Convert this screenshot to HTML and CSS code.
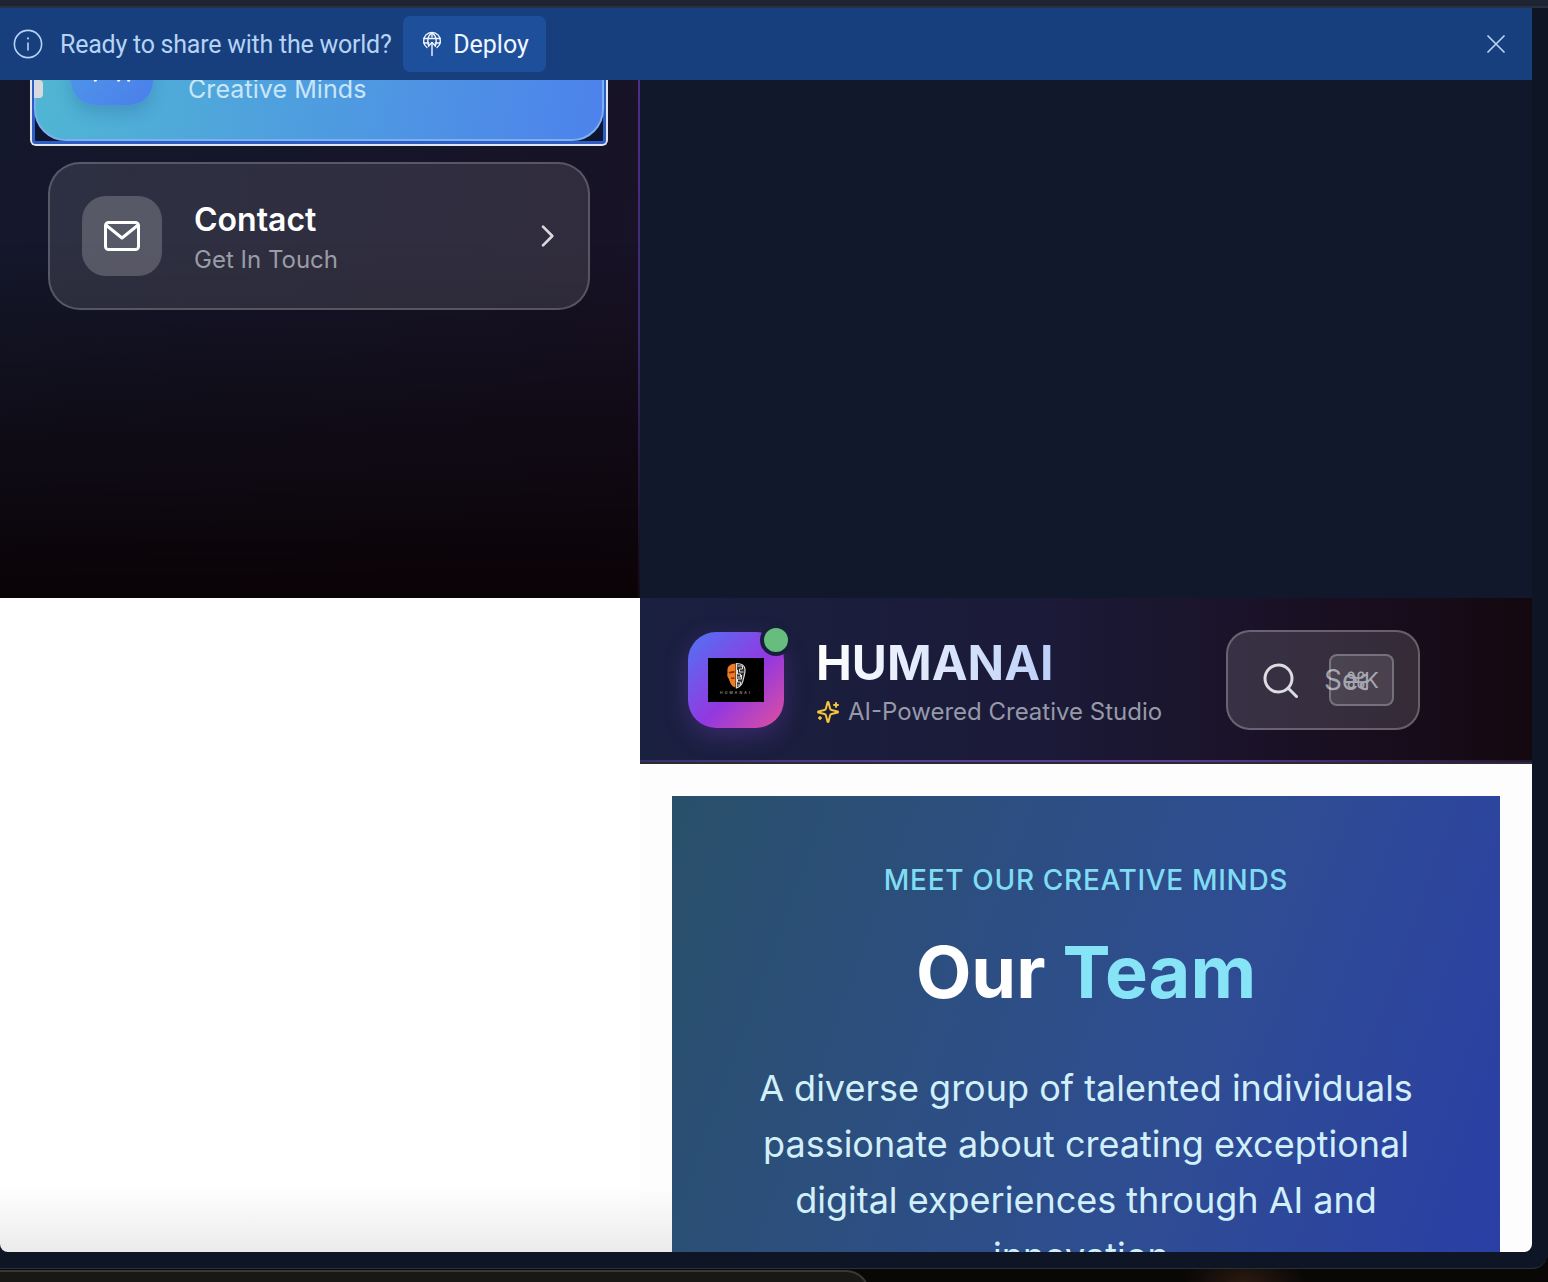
FILE: index.html
```html
<!DOCTYPE html>
<html lang="en">
<head>
<meta charset="utf-8">
<title>HUMANAI</title>
<link rel="stylesheet" href="styles.css">
</head>
<body>
<div class="frame">
  <div class="strip"></div>
  <div class="viewport">
    <div class="banner">
      <svg class="info-icon" viewBox="0 0 30 30" width="30" height="30" fill="none" stroke="currentColor" stroke-width="1.6" stroke-linecap="round"><circle cx="15" cy="15" r="13.6"/><path d="M15 14v7"/><path d="M15 9.2v.4" stroke-width="2"/></svg>
      <span class="banner-text">Ready to share with the world?</span>
      <button class="deploy">
        <svg viewBox="0 0 22 26" width="22" height="26" fill="none" stroke="currentColor" stroke-width="1.4" stroke-linecap="round" stroke-linejoin="round"><path d="M6 16.5A8.4 8.4 0 1 1 16 16.5"/><path d="M11 1.8C7.5 4 6.8 7 6.8 10c0 2 .4 3.5 1 5"/><path d="M11 1.8c3.5 2.2 4.2 5.2 4.2 8.2 0 2-.4 3.5-1 5"/><path d="M2.8 7.5h16.4"/><path d="M2.8 12h5"/><path d="M14.2 12h5"/><path d="M11 2v4"/><path d="M11 24.5V11.5"/><path d="M7.5 15L11 11.5 14.500 15"/></svg>
        <span>Deploy</span>
      </button>
      <svg class="close-icon" viewBox="0 0 20 20" width="20" height="20" fill="none" stroke="currentColor" stroke-width="1.7"><path d="M1.500 1.500l17 17M18.500 1.500l-17 17"/></svg>
    </div>
    <div class="split">
      <div class="left">
        <aside class="sidebar">
          <div class="nav-active">
            <span class="nav-marker"></span>
            <div class="nav-active-inner">
              <div class="nav-active-icon">
                <svg viewBox="0 0 24 24" width="40" height="40" fill="none" stroke="#fff" stroke-width="2" stroke-linecap="round" stroke-linejoin="round"><path d="M16 21v-2a4 4 0 0 0-4-4H6a4 4 0 0 0-4 4v2"/><circle cx="9" cy="7" r="4"/><path d="M22 21v-2a4 4 0 0 0-3-3.870"/><path d="M16 3.130a4 4 0 0 1 0 7.750"/></svg>
              </div>
              <div class="nav-active-text">
                <div class="nav-title">Our Team</div>
                <div class="nav-active-sub">Creative Minds</div>
              </div>
            </div>
          </div>
          <a class="nav-item">
            <div class="nav-icon">
              <svg viewBox="0 0 44 44" width="44" height="44" fill="none" stroke="#fff" stroke-width="3" stroke-linecap="round" stroke-linejoin="round"><rect x="5.500" y="8.500" width="33" height="27" rx="3"/><path d="M6.500 11.500L22 24l15.500-12.500"/></svg>
            </div>
            <div class="nav-text">
              <div class="nav-title">Contact</div>
              <div class="nav-sub">Get In Touch</div>
            </div>
            <svg class="chevron" viewBox="0 0 24 24" width="32" height="32" fill="none" stroke="currentColor" stroke-width="2" stroke-linecap="round" stroke-linejoin="round"><path d="M9 5l7 7-7 7"/></svg>
          </a>
        </aside>
        <div class="left-blank"></div>
      </div>
      <div class="right">
        <div class="right-dark"></div>
        <header class="topbar">
          <div class="logo">
            <div class="logo-image">
              <svg viewBox="0 0 56 44" width="56" height="44">
                <path d="M27.500 5.500c-4.500.2-7.500 2.400-8 5.500-.3 2.200.3 3.800-.2 5.500-.4 1.700 1 3.300 1.700 4.800.8 2.300 1.500 5 3.500 6.700 1 .8 2 1.300 3 1.500z" fill="#f07c22"/>
                <path d="M20.500 14l6-1.200v2l-5 .8zM23 19.500h3.500v1.500H23z" fill="#8a2d08"/>
                <path d="M28.500 5.500c4.800 0 8 2 8.500 5.500.3 2.700-.5 5.500-1 7.500-.5 2.500-1.100 5-2.300 7.500-1 1.700-3.200 3.300-5.200 4z" fill="#2a2a2a" stroke="#ddd" stroke-width="1.200"/>
                <path d="M29.500 8h5v3h-3v3h4M29.500 12v4h3v3h-3M33.500 17v4h-4v3h3v3h-3" fill="none" stroke="#ddd" stroke-width="1"/>
                <text class="logo-word" x="28" y="36" text-anchor="middle">HUMANAI</text>
              </svg>
            </div>
            <span class="status-dot"></span>
          </div>
          <div class="brand">
            <div class="brand-name">HUMANAI</div>
            <div class="brand-tag">
              <svg viewBox="0 0 24 24" width="24" height="24" fill="none" stroke="#f5c63c" stroke-width="2" stroke-linecap="round" stroke-linejoin="round"><path d="M9.937 15.500A2 2 0 0 0 8.500 14.063l-6.135-1.582a.5.5 0 0 1 0-.962L8.500 9.936A2 2 0 0 0 9.937 8.500l1.582-6.135a.5.5 0 0 1 .963 0L14.063 8.500A2 2 0 0 0 15.500 9.937l6.135 1.581a.5.5 0 0 1 0 .964L15.500 14.063a2 2 0 0 0-1.437 1.437l-1.582 6.135a.5.5 0 0 1-.963 0z"/><path d="M20 3v4"/><path d="M22 5h-4"/><path d="M4 17v2"/><path d="M5 18H3"/></svg>
              <span>AI-Powered Creative Studio</span>
            </div>
          </div>
          <div class="search">
            <svg viewBox="0 0 36 36" width="36" height="36" fill="none" stroke="currentColor" stroke-width="3" stroke-linecap="round"><circle cx="16.500" cy="16.500" r="13.500"/><path d="M26.500 26.500l8 8"/></svg>
            <span class="search-label">Search</span>
            <span class="kbd">⌘K</span>
          </div>
        </header>
        <main class="content">
          <section class="hero">
            <div class="eyebrow">MEET OUR CREATIVE MINDS</div>
            <h1 class="hero-title">Our <span class="accent">Team</span></h1>
            <p class="hero-copy">A diverse group of talented individuals passionate about creating exceptional digital experiences through AI and innovation.</p>
          </section>
        </main>
      </div>
    </div>
  </div>
</div>
<div class="dock">
  <div class="dock-panel"></div>
</div>
</body>
</html>
```

FILE: styles.css
```css
* { box-sizing: border-box; }
html, body { margin: 0; height: 100%; }
body {
  background: #0a0807;
  font-family: Inter, "Liberation Sans", sans-serif;
  overflow: hidden;
}
.frame {
  height: 1269px;
  background: #0e1524;
  border-bottom: 1px solid #2a2f3a;
  border-bottom-right-radius: 16px;
  overflow: hidden;
}
.strip {
  height: 8px;
  background: linear-gradient(#1f2433 0 6px, #2a2f42 6px);
}
.viewport {
  width: 1532px;
  height: 1244px;
  display: flex;
  flex-direction: column;
  border-radius: 0 0 8px 8px;
  overflow: hidden;
}
.banner {
  flex: none;
  height: 72px;
  background: #183f7d;
  color: #b5d3f5;
  display: flex;
  align-items: center;
  padding: 0 26px 0 13px;
}
.info-icon { flex: none; }
.banner-text {
  font-family: Roboto, sans-serif;
  font-size: 25px;
  letter-spacing: -.24px;
  margin-left: 17px;
}
.deploy {
  margin-left: 12px;
  height: 56px;
  width: 143px;
  background: #1e4f9b;
  border: 0;
  border-radius: 7px;
  color: #f0f6ff;
  font-family: Roboto, sans-serif;
  font-size: 25px;
  display: flex;
  align-items: center;
  justify-content: center;
  gap: 10px;
  padding: 0;
}
.close-icon { margin-left: auto; color: #b5d3f5; }
.split {
  flex: 1;
  min-height: 0;
  display: grid;
  grid-template-columns: 640px 1fr;
}
.left, .right { display: flex; flex-direction: column; min-height: 0; overflow: hidden; }
.sidebar {
  flex: none;
  height: 518px;
  overflow: hidden;
  padding: 0 48px;
  background:
    linear-gradient(180deg, rgba(10,3,8,0) 30%, #0a0306 100%),
    linear-gradient(100deg, #14182c, #181226 100%);
  border-right: 2px solid;
  border-image: linear-gradient(#4a2f8a, #3a2a6a 50%, #120a14) 1;
}
.left-blank {
  flex: 1;
  background: linear-gradient(#fff 0, #fff 90%, #ebebeb 100%);
}
.nav-active {
  position: relative;
  margin: -96px -18px 0 -18px;
  height: 162px;
  padding: 4px 2px 3px;
  background: #0e1530;
  border: 2px solid #dfe6f2;
  border-top: 0;
  border-radius: 6px;
  box-shadow: inset 0 0 0 3px #2c5cc4;
}
.nav-active-inner {
  height: 153px;
  display: flex;
  align-items: center;
  gap: 35px;
  padding: 0 35px;
  border-radius: 32px;
  border: 2px solid #7cb0ee;
  background: linear-gradient(100deg, #50b8d2, #4d82ec);
}
.nav-marker {
  position: absolute;
  left: 2px;
  top: 96px;
  width: 9px;
  height: 18px;
  background: #d8dade;
  border-radius: 0 4px 4px 0;
  z-index: 1;
}
.nav-active-icon {
  flex: none;
  width: 82px;
  height: 80px;
  border-radius: 24px;
  background: linear-gradient(135deg, #4f9ee6, #4b7eec);
  box-shadow: 0 8px 16px rgba(20,60,120,.2);
  display: flex;
  align-items: center;
  justify-content: center;
}
.nav-active-sub {
  font-size: 25px;
  line-height: 32px;
  letter-spacing: .07px;
  color: #c9e6f8;
  margin-top: 8px;
}
.nav-item {
  margin-top: 16px;
  height: 148px;
  display: flex;
  align-items: center;
  padding: 0 32px;
  border: 2px solid rgba(255,255,255,.2);
  border-radius: 32px;
  background: rgba(255,255,255,.11);
}
.nav-icon {
  flex: none;
  width: 80px;
  height: 80px;
  border-radius: 24px;
  background: rgba(255,255,255,.2);
  display: flex;
  align-items: center;
  justify-content: center;
}
.nav-text { margin-left: 32px; flex: 1; padding-top: 4px; }
.nav-title {
  font-size: 32px;
  line-height: 40px;
  font-weight: 600;
  color: #fff;
}
.nav-sub {
  font-size: 24px;
  line-height: 32px;
  color: #9a9ca6;
  margin-top: 4px;
}
.chevron { color: #d8d9de; margin-right: -7px; }
.right-dark { flex: none; height: 518px; background: #11182b; }
.topbar {
  flex: none;
  height: 164px;
  display: flex;
  align-items: center;
  padding: 2px 48px 0;
  background: linear-gradient(90deg, #1a2040, #1b1a38 45%, #1a1024 75%, #14080f);
  border-bottom: 2px solid;
  border-image: linear-gradient(90deg, #3a2f6a, #5c3a96 30%, #5c3a96 60%, #241436) 1;
}
.logo {
  position: relative;
  flex: none;
  width: 96px;
  height: 96px;
  border-radius: 28px;
  background: linear-gradient(135deg, #4f74f4, #9338e0 55%, #e0509c);
  box-shadow: 0 8px 24px rgba(130,70,220,.3);
  display: flex;
  align-items: center;
  justify-content: center;
}
.logo-image { width: 56px; height: 44px; background: #000; display: flex; }
.logo-word { font-size: 3.500px; letter-spacing: 2.200px; fill: #d8c8b0; font-family: Inter, sans-serif; }
.status-dot {
  position: absolute;
  right: -8px;
  top: -8px;
  width: 32px;
  height: 32px;
  border-radius: 50%;
  background: #66bd7d;
  border: 4px solid #191e3c;
}
.brand { margin-left: 32px; flex: none; width: 410px; }
.brand-name {
  font-size: 48px;
  line-height: 60px;
  font-weight: 700;
  background: linear-gradient(90deg, #fff, #bcd0f8);
  background-size: 237px 100%;
  background-repeat: no-repeat;
  -webkit-background-clip: text;
  background-clip: text;
  color: transparent;
}
.brand-tag {
  display: flex;
  align-items: center;
  gap: 8px;
  font-size: 24px;
  line-height: 32px;
  color: #9599a8;
  margin-top: 3px;
}
.search {
  position: relative;
  flex: none;
  width: 194px;
  height: 100px;
  border-radius: 24px;
  border: 2px solid rgba(255,255,255,.25);
  background: rgba(255,255,255,.13);
  display: flex;
  align-items: center;
  padding: 0 34px;
  color: #dcdce2;
}
.search-label {
  margin-left: 26px;
  flex: none;
  width: 44px;
  overflow: hidden;
  font-size: 28px;
  color: #9a9ca8;
}
.kbd {
  position: absolute;
  left: 101px;
  top: 22px;
  width: 65px;
  height: 52px;
  padding-right: 2px;
  border: 2px solid rgba(255,255,255,.25);
  border-radius: 8px;
  background: rgba(255,255,255,.1);
  font-size: 22px;
  letter-spacing: -3px;
  color: #a6a6b0;
  display: flex;
  align-items: center;
  justify-content: center;
}
.content {
  flex: 1;
  min-height: 0;
  overflow: hidden;
  border-top: 2px solid #2a2c34;
  background: linear-gradient(#fdfdfd 87%, #ebebeb) left / 32px 100% no-repeat, #fdfdfd;
  padding: 32px 32px 0;
}
.hero {
  height: 600px;
  padding: 64px 64px 0;
  text-align: center;
  background: linear-gradient(110deg, #29506a, #2f4d92 58%, #2a3da8);
}
.eyebrow {
  font-size: 28px;
  line-height: 40px;
  font-weight: 500;
  letter-spacing: .68px;
  color: #7fdcf2;
}
.hero-title {
  margin: 32px 0 0;
  font-size: 72px;
  line-height: 80px;
  font-weight: 700;
  color: #fff;
}
.accent { color: #86e4f6; }
.hero-copy {
  margin: 48px 0 0;
  font-size: 36px;
  line-height: 56px;
  color: #d2f0fa;
}
.dock {
  height: 13px;
  background: radial-gradient(60px 30px at 1245px 100%, #2a1a10, transparent), #0a0807;
  overflow: hidden;
}
.dock-panel {
  width: 870px;
  height: 30px;
  margin-top: 1px;
  background: #1a1816;
  border-top: 2px solid #3a3835;
  border-right: 2px solid #3a3835;
  border-top-right-radius: 24px;
}
```
